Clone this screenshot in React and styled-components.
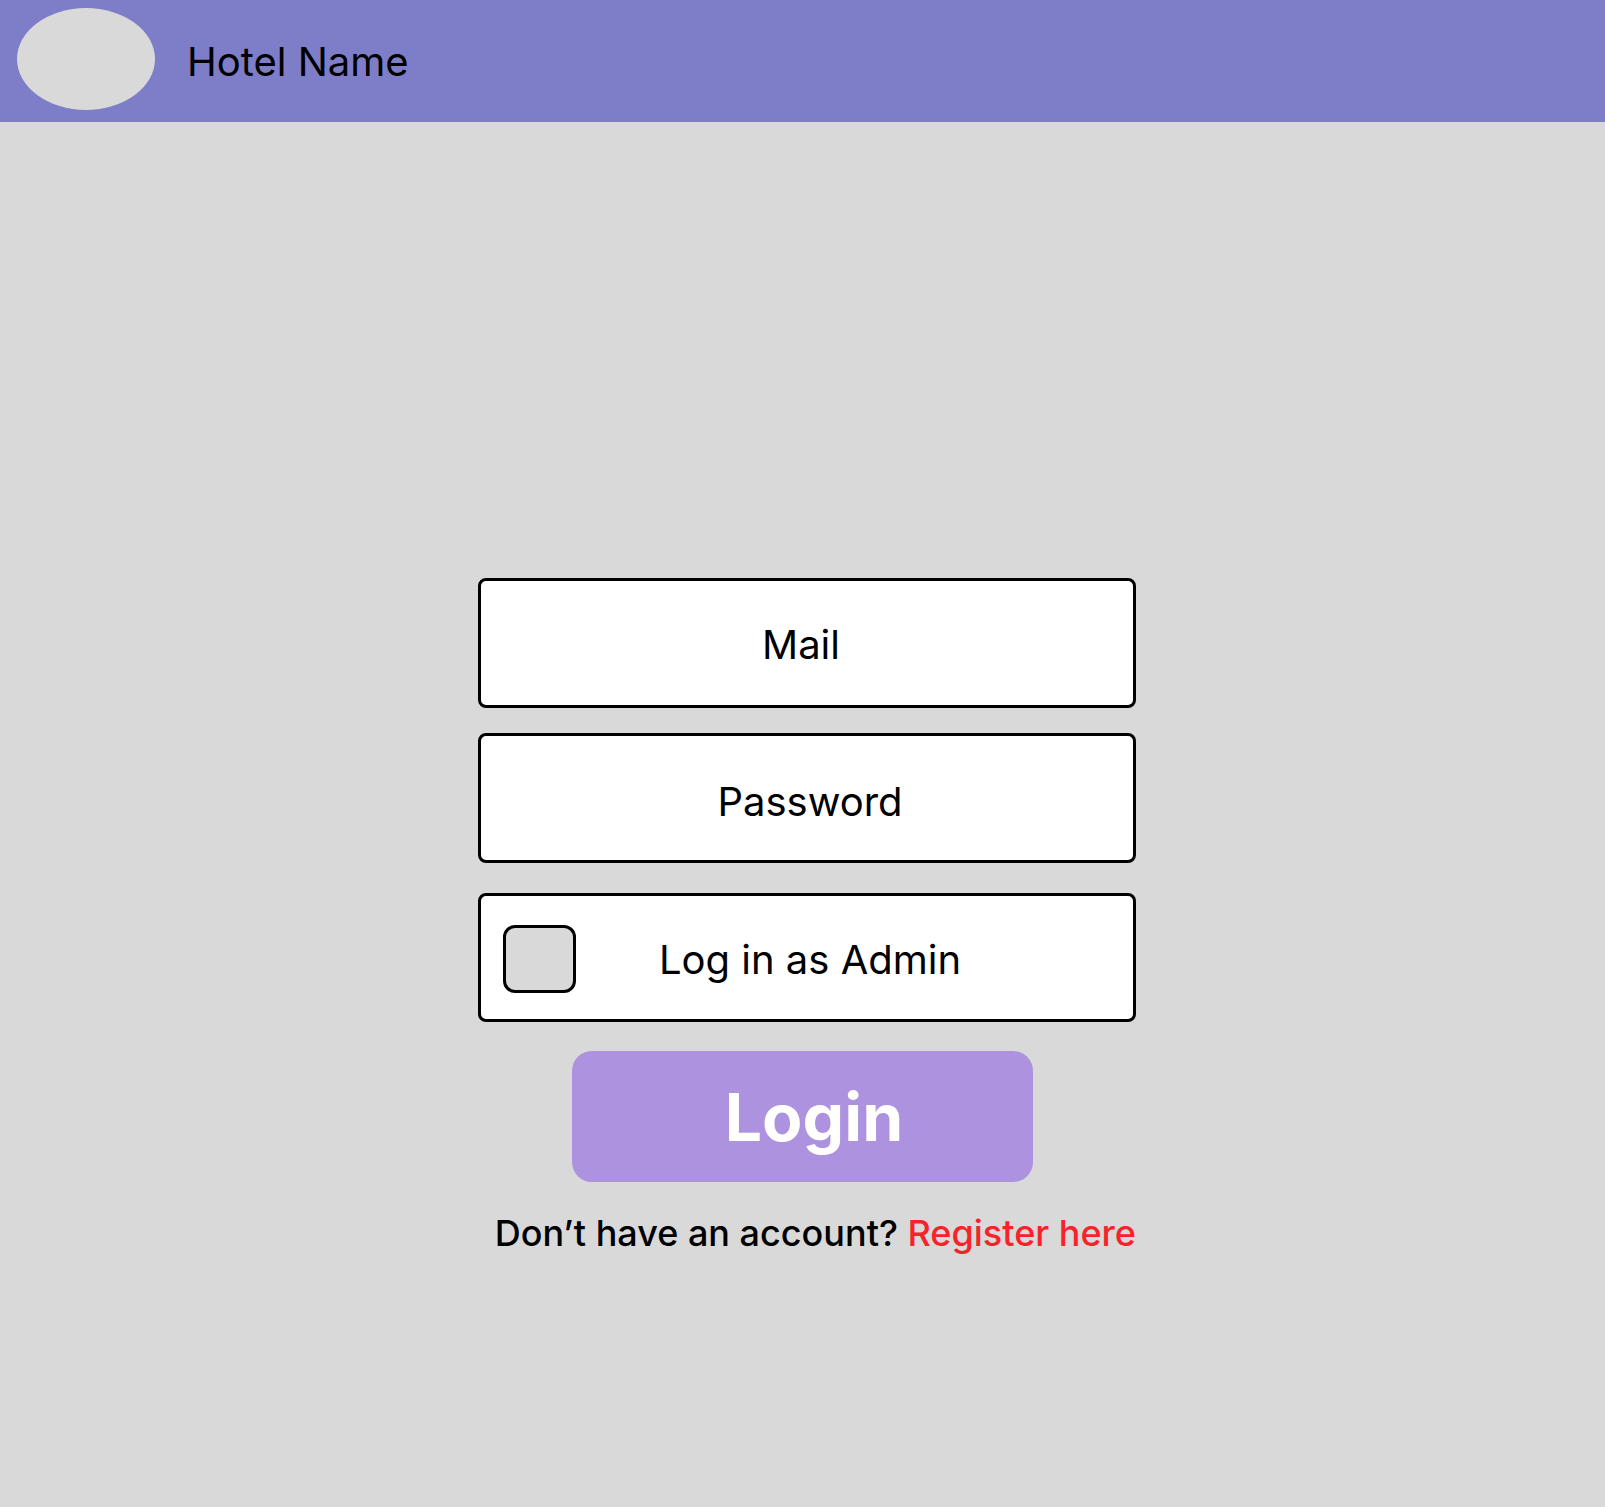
import React from "react";
import styled, { createGlobalStyle } from "styled-components";

const GlobalStyle = createGlobalStyle`
  html, body {
    margin: 0;
    padding: 0;
    background-color: #d9d9d9;
    font-family: Inter, "Liberation Sans", sans-serif;
    color: #000;
  }
  * {
    box-sizing: border-box;
  }
`;

const Wrap = styled.div`
  width: 100%;
  min-height: 100vh;
  background-color: #d9d9d9;
`;
const Header = styled.header`
  height: 122px;
  background-color: #7e7dc8;
  display: flex;
  align-items: center;
  padding-left: 17px;
  gap: 32px;
`;
const Logo = styled.div`
  width: 138px;
  height: 102px;
  border-radius: 50%;
  background-color: #d9d9d9;
  margin-top: -4px;
`;
const HotelName = styled.h1`
  margin: 0;
  font-size: 40px;
  font-weight: 400;
  line-height: 1;
  margin-top: 2px;
`;
const Main = styled.main`
  display: flex;
  flex-direction: column;
  align-items: center;
  padding-top: 456px;
`;
const Field = styled.div`
  width: 658px;
  height: ${(p) => p.$height || 130}px;
  margin-left: 9px;
  margin-bottom: ${(p) => p.$gap || 0}px;
  background-color: #fff;
  border: 3px solid #000;
  border-radius: 8px;
  display: grid;
  grid-template-columns: 1fr auto 1fr;
  align-items: center;
  padding: 0 22px;
`;
const FieldLabel = styled.span`
  grid-column: 2;
  font-size: 40px;
  line-height: 1;
  transform: translate(${(p) => p.$shift || 0}px, ${(p) => p.$lift || 2}px);
`;
const CheckBox = styled.span`
  grid-column: 1;
  justify-self: start;
  width: 73px;
  height: 68px;
  border: 3.5px solid #000;
  border-radius: 12px;
  background-color: #d9d9d9;
  margin-top: 2px;
`;
const LoginButton = styled.button`
  width: 461px;
  height: 131px;
  border: none;
  border-radius: 20px;
  background-color: #ac92df;
  color: #fff;
  font-family: Inter, "Liberation Sans", sans-serif;
  font-size: 66px;
  font-weight: 700;
  padding: 0 0 0 23px;
  cursor: pointer;
`;
const Footer = styled.p`
  width: 658px;
  margin: 30px 0 0 9px;
  text-align: right;
  font-size: 36px;
  font-weight: 500;
  line-height: 1.21;
  a {
    color: #fa2229;
    text-decoration: none;
  }
`;

export default function App() {
  return (
    <Wrap>
      <GlobalStyle />
      <Header>
        <Logo />
        <HotelName>Hotel Name</HotelName>
      </Header>
      <Main>
        <Field $gap={25}>
          <FieldLabel $shift={-6}>Mail</FieldLabel>
        </Field>
        <Field $gap={30}>
          <FieldLabel $shift={3} $lift={4}>Password</FieldLabel>
        </Field>
        <Field $height={129} $gap={29}>
          <CheckBox />
          <FieldLabel $shift={3}>Log in as Admin</FieldLabel>
          <span />
        </Field>
        <LoginButton>Login</LoginButton>
        <Footer>
          Don’t have an account? <a href="/">Register here</a>
        </Footer>
      </Main>
    </Wrap>
  );
}
